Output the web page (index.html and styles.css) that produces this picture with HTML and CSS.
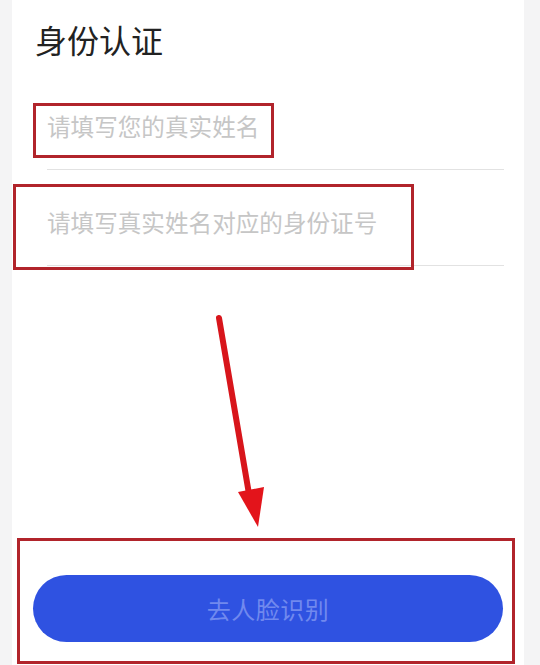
FILE: index.html
```html
<!DOCTYPE html>
<html lang="zh-CN">
<head>
<meta charset="utf-8">
<title>身份认证</title>
<link rel="stylesheet" href="styles.css">
</head>
<body>
<div class="page">
  <main class="panel">
    <h1 class="title">身份认证</h1>
    <div class="field"><span class="placeholder">请填写您的真实姓名</span></div>
    <div class="field"><span class="placeholder">请填写真实姓名对应的身份证号</span></div>
    <div class="spacer"></div>
    <button class="btn" type="button">去人脸识别</button>
  </main>

  <div class="mark mark-name"></div>
  <div class="mark mark-id"></div>
  <div class="mark mark-btn"></div>
  <svg class="arrow" width="540" height="665" viewBox="0 0 540 665">
    <line x1="219" y1="318" x2="249" y2="494" stroke="#d8151b" stroke-width="6" stroke-linecap="round"/>
    <polygon points="238,492 264,487 258,527" fill="#e3141b"/>
  </svg>
</div>
</body>
</html>
```
FILE: styles.css
```css
html, body {
  margin: 0;
  padding: 0;
  background: #f4f4f5;
}
body {
  font-family: "Noto Sans CJK SC", "Noto Sans", sans-serif;
}
.page {
  position: relative;
  width: 540px;
  height: 665px;
  overflow: hidden;
  display: flex;
  padding-left: 12px;
  box-sizing: border-box;
}
.panel {
  width: 512px;
  height: 665px;
  background: #ffffff;
  display: flex;
  flex-direction: column;
  padding-top: 17px;
  box-sizing: border-box;
}
.title {
  margin: 0 0 13px 23px;
  font-size: 32px;
  line-height: 44px;
  font-weight: 400;
  color: #222222;
}
.field {
  margin: 0 20px 0 35px;
  height: 96px;
  box-sizing: border-box;
  padding-top: 37px;
  border-bottom: 1px solid #e2e2e2;
}
.placeholder {
  display: block;
  font-size: 23.6px;
  line-height: 30px;
  color: #c6c6c6;
  white-space: nowrap;
}
.spacer {
  height: 309px;
  flex: none;
}
.btn {
  margin: 0 21px;
  height: 67px;
  border: none;
  border-radius: 34px;
  background: #2f52e1;
  color: #7189ee;
  font-family: "Noto Sans CJK SC", "Noto Sans", sans-serif;
  font-size: 24px;
  letter-spacing: 0.5px;
  padding: 0;
}
.mark {
  position: absolute;
  border: 3px solid #b1242b;
  box-sizing: border-box;
}
.mark-name {
  left: 33px;
  top: 103px;
  width: 241px;
  height: 55px;
}
.mark-id {
  left: 13px;
  top: 184px;
  width: 401px;
  height: 86px;
}
.mark-btn {
  left: 17px;
  top: 538px;
  width: 498px;
  height: 126px;
}
.arrow {
  position: absolute;
  left: 0;
  top: 0;
}
```
